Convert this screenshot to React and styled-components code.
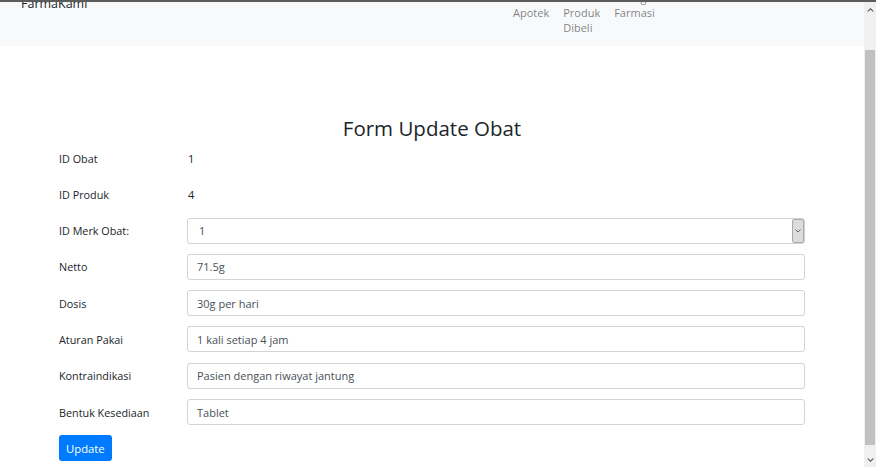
import styled, { createGlobalStyle } from 'styled-components';

const GlobalStyle = createGlobalStyle`
  html, body {
    margin: 0;
    padding: 0;
    background: #fff;
    overflow: hidden;
  }
  body {
    font-family: "Open Sans", "Noto Sans", sans-serif;
    color: #212529;
  }
`;

const Frame = styled.div`
  display: flex;
  height: 465px;
  border-top: 2px solid #5c5c5c;
  overflow: hidden;
`;

const Main = styled.div`
  flex: 1;
  min-width: 0;
  overflow: hidden;
`;

const Navbar = styled.nav`
  display: flex;
  align-items: flex-start;
  margin-top: -12px;
  padding: 0 0 11px 21px;
  background: #f8f9fa;
`;

const Brand = styled.a`
  flex: 0 0 485px;
  margin-top: 4px;
  font-size: 12.5px;
  line-height: 20px;
  color: rgba(0, 0, 0, 0.9);
  text-decoration: none;
`;

const NavList = styled.ul`
  display: flex;
  margin: 0;
  padding: 0;
  list-style: none;
`;

const NavLink = styled.li`
  width: min-content;
  padding: 0 7px;
  font-size: 11px;
  line-height: 15px;
  color: rgba(0, 0, 0, 0.5);
`;

const Container = styled.div`
  width: 746px;
  margin: 0 auto;
`;

const Title = styled.h2`
  margin: 69px 0 4px;
  text-align: center;
  font-size: 20.5px;
  font-weight: 400;
  line-height: 26px;
`;

const Row = styled.div`
  display: flex;
  align-items: center;
  height: 26px;
  margin-bottom: 10.3px;
`;

const Label = styled.label`
  flex: 0 0 128px;
  font-size: 10.8px;
`;

const Value = styled.span`
  padding-left: 1px;
  font-size: 11px;
`;

const Input = styled.input`
  flex: 1;
  box-sizing: border-box;
  height: 26px;
  padding: 0 9px;
  border: 1px solid #ced4da;
  border-radius: 3px;
  font-family: inherit;
  font-size: 11px;
  color: #495057;
  outline: none;
`;

const SelectBox = styled.div`
  flex: 1;
  display: flex;
  align-items: stretch;
  box-sizing: border-box;
  height: 26px;
  border: 1px solid #ced4da;
  border-radius: 3px;
  font-size: 11px;
  color: #495057;
`;

const SelectValue = styled.span`
  flex: 1;
  display: flex;
  align-items: center;
  padding-left: 11px;
`;

const ArrowBox = styled.span`
  display: flex;
  align-items: center;
  justify-content: center;
  width: 10px;
  background: #dcdcdc;
  border: 1px solid #a9a9a9;
  border-radius: 2px;
`;

const Button = styled.button`
  box-sizing: border-box;
  height: 26px;
  padding: 0 7px;
  border: none;
  border-radius: 3px;
  background: #007bff;
  color: #fff;
  font-family: inherit;
  font-size: 11.3px;
`;

const Scrollbar = styled.div`
  display: flex;
  flex-direction: column;
  width: 12px;
  background: #f0f0f0;
`;

const ArrowCell = styled.div`
  display: flex;
  align-items: center;
  justify-content: center;
  height: 14px;
`;

const Track = styled.div`
  flex: 1;
  padding: 34px 1px 5px;
`;

const Thumb = styled.div`
  height: 395px;
  background: #c1c1c1;
`;

const Chevron = ({ up }) => (
  <svg width="7" height="5" viewBox="0 0 7 5">
    <path
      d={up ? 'M0 4.5 L3.5 1 L7 4.5 L5.5 4.5 L3.5 2.5 L1.5 4.5 Z' : 'M0 0.5 L3.5 4 L7 0.5 L5.5 0.5 L3.5 2.5 L1.5 0.5 Z'}
      fill="#505050"
    />
  </svg>
);

const fields = [
  ['Netto', '71.5g'],
  ['Dosis', '30g per hari'],
  ['Aturan Pakai', '1 kali setiap 4 jam'],
  ['Kontraindikasi', 'Pasien dengan riwayat jantung'],
  ['Bentuk Kesediaan', 'Tablet'],
];

export default function App() {
  return (
    <>
      <GlobalStyle />
      <Frame>
        <Main>
          <Navbar>
            <Brand href="#">FarmaKami</Brand>
            <NavList>
              <NavLink>Data Apotek</NavLink>
              <NavLink>Data Produk Dibeli</NavLink>
              <NavLink>Ruang Farmasi</NavLink>
            </NavList>
          </Navbar>
          <Container>
            <Title>Form Update Obat</Title>
            <Row>
              <Label>ID Obat</Label>
              <Value>1</Value>
            </Row>
            <Row>
              <Label>ID Produk</Label>
              <Value>4</Value>
            </Row>
            <Row>
              <Label>ID Merk Obat:</Label>
              <SelectBox>
                <SelectValue>1</SelectValue>
                <ArrowBox>
                  <svg width="6" height="4" viewBox="0 0 6 4">
                    <path d="M0.5 0.5 L3 3 L5.5 0.5" stroke="#666" fill="none" strokeWidth="1" />
                  </svg>
                </ArrowBox>
              </SelectBox>
            </Row>
            {fields.map(([label, value]) => (
              <Row key={label}>
                <Label>{label}</Label>
                <Input defaultValue={value} />
              </Row>
            ))}
            <Button>Update</Button>
          </Container>
        </Main>
        <Scrollbar>
          <ArrowCell>
            <Chevron up />
          </ArrowCell>
          <Track>
            <Thumb />
          </Track>
          <ArrowCell>
            <Chevron />
          </ArrowCell>
        </Scrollbar>
      </Frame>
    </>
  );
}
